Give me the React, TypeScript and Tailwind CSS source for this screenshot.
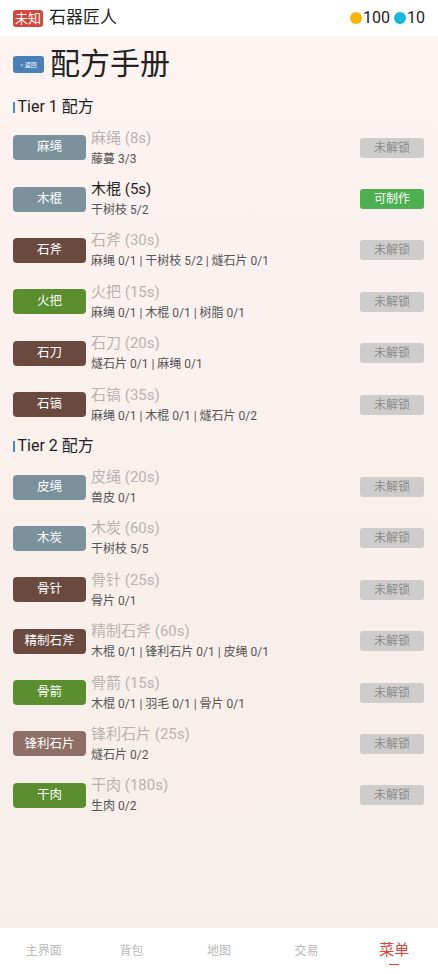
import React from "react";

type Recipe = {
  name: string;
  time: string;
  needs: string;
  color: string;
  status: "locked" | "ready";
};

const tier1: Recipe[] = [
  { name: "麻绳", time: "8s", needs: "藤蔓 3/3", color: "bg-[#7b929d]", status: "locked" },
  { name: "木棍", time: "5s", needs: "干树枝 5/2", color: "bg-[#7b929d]", status: "ready" },
  { name: "石斧", time: "30s", needs: "麻绳 0/1 | 干树枝 5/2 | 燧石片 0/1", color: "bg-[#6a4a3f]", status: "locked" },
  { name: "火把", time: "15s", needs: "麻绳 0/1 | 木棍 0/1 | 树脂 0/1", color: "bg-[#5a8e2f]", status: "locked" },
  { name: "石刀", time: "20s", needs: "燧石片 0/1 | 麻绳 0/1", color: "bg-[#6a4a3f]", status: "locked" },
  { name: "石镐", time: "35s", needs: "麻绳 0/1 | 木棍 0/1 | 燧石片 0/2", color: "bg-[#6a4a3f]", status: "locked" },
];

const tier2: Recipe[] = [
  { name: "皮绳", time: "20s", needs: "兽皮 0/1", color: "bg-[#7b929d]", status: "locked" },
  { name: "木炭", time: "60s", needs: "干树枝 5/5", color: "bg-[#7b929d]", status: "locked" },
  { name: "骨针", time: "25s", needs: "骨片 0/1", color: "bg-[#6a4a3f]", status: "locked" },
  { name: "精制石斧", time: "60s", needs: "木棍 0/1 | 锋利石片 0/1 | 皮绳 0/1", color: "bg-[#6a4a3f]", status: "locked" },
  { name: "骨箭", time: "15s", needs: "木棍 0/1 | 羽毛 0/1 | 骨片 0/1", color: "bg-[#5a8e2f]", status: "locked" },
  { name: "锋利石片", time: "25s", needs: "燧石片 0/2", color: "bg-[#8d6f65]", status: "locked" },
  { name: "干肉", time: "180s", needs: "生肉 0/2", color: "bg-[#5a8e2f]", status: "locked" },
];

function Row({ r }: { r: Recipe }) {
  const ready = r.status === "ready";
  return (
    <div className="flex items-center h-[51.4px] pl-[13px] pr-[14px]">
      <div className={`${r.color} w-[73px] h-[25px] rounded-[4px] flex items-center justify-center text-white text-[12.5px] shrink-0`}>
        {r.name}
      </div>
      <div className="flex-1 ml-[5px] flex flex-col leading-none">
        <span className={`text-[15px] ${ready ? "text-[#1f1f1f]" : "text-[#b7b4b2]"}`}>
          {r.name} ({r.time})
        </span>
        <span className="text-[12px] text-[#555] mt-[7px]">{r.needs}</span>
      </div>
      {ready ? (
        <div className="w-[64px] h-[20px] rounded-[3px] bg-[#4caf50] text-white text-[12px] flex items-center justify-center">
          可制作
        </div>
      ) : (
        <div className="w-[64px] h-[20px] rounded-[3px] bg-[#cfcdcc] text-[#8a8a8a] text-[12px] flex items-center justify-center">
          未解锁
        </div>
      )}
    </div>
  );
}

function TierHeading({ label }: { label: string }) {
  return (
    <div className="flex items-center pl-[13px] h-[26px]">
      <span className="w-[1.5px] h-[11px] bg-[#3b8ed8] mr-[3px]" />
      <span className="text-[16px] text-[#222]">{label}</span>
    </div>
  );
}

export default function App() {
  const tabs = ["主界面", "背包", "地图", "交易"];
  return (
    <div
      className="w-[438px] h-[974px] flex flex-col overflow-hidden"
      style={{ fontFamily: 'Roboto, "Noto Sans CJK SC", sans-serif' }}
    >
      <header className="h-[36px] bg-white flex items-center px-[13px] shrink-0">
        <span className="bg-[#d6463c] text-white text-[13px] leading-none px-[2px] py-[2px] rounded-[3px]">未知</span>
        <span className="ml-[6px] text-[17px] text-[#222]">石器匠人</span>
        <div className="ml-auto flex items-center text-[16px] text-[#222]">
          <span className="w-[12px] h-[12px] rounded-full bg-[#fbb40a] mr-[1px]" />
          <span>100</span>
          <span className="w-[12px] h-[12px] rounded-full bg-[#16b9d8] ml-[4px] mr-[1px]" />
          <span>10</span>
        </div>
      </header>

      <main className="flex-1 bg-gradient-to-b from-[#fdf3f1] to-[#f6eee8]">
        <div className="flex items-center pl-[13px] pt-[4px] h-[52px]">
          <div className="w-[31px] h-[17px] rounded-[3px] bg-[#4a7fb8] text-white text-[6px] flex items-center justify-center">
            &lt; 返回
          </div>
          <h1 className="ml-[6px] text-[30px] text-[#222] leading-none">配方手册</h1>
        </div>
        <div className="mt-[6px]">
          <TierHeading label="Tier 1 配方" />
          <div className="mt-[2px]">
            {tier1.map((r) => (
              <Row key={r.name} r={r} />
            ))}
          </div>
          <div className="mt-[3px]">
            <TierHeading label="Tier 2 配方" />
          </div>
          <div className="mt-[2px]">
            {tier2.map((r) => (
              <Row key={r.name} r={r} />
            ))}
          </div>
        </div>
      </main>

      <nav className="h-[46px] bg-white grid grid-cols-5 shrink-0">
        {tabs.map((t) => (
          <div key={t} className="flex items-center justify-center text-[12px] text-[#b8b8b8]">
            {t}
          </div>
        ))}
        <div className="flex flex-col items-center justify-center pt-[6px]">
          <span className="text-[15px] text-[#d6463c] leading-none">菜单</span>
          <span className="w-[10px] h-[1.5px] bg-[#d6463c] mt-[6px]" />
        </div>
      </nav>
    </div>
  );
}
